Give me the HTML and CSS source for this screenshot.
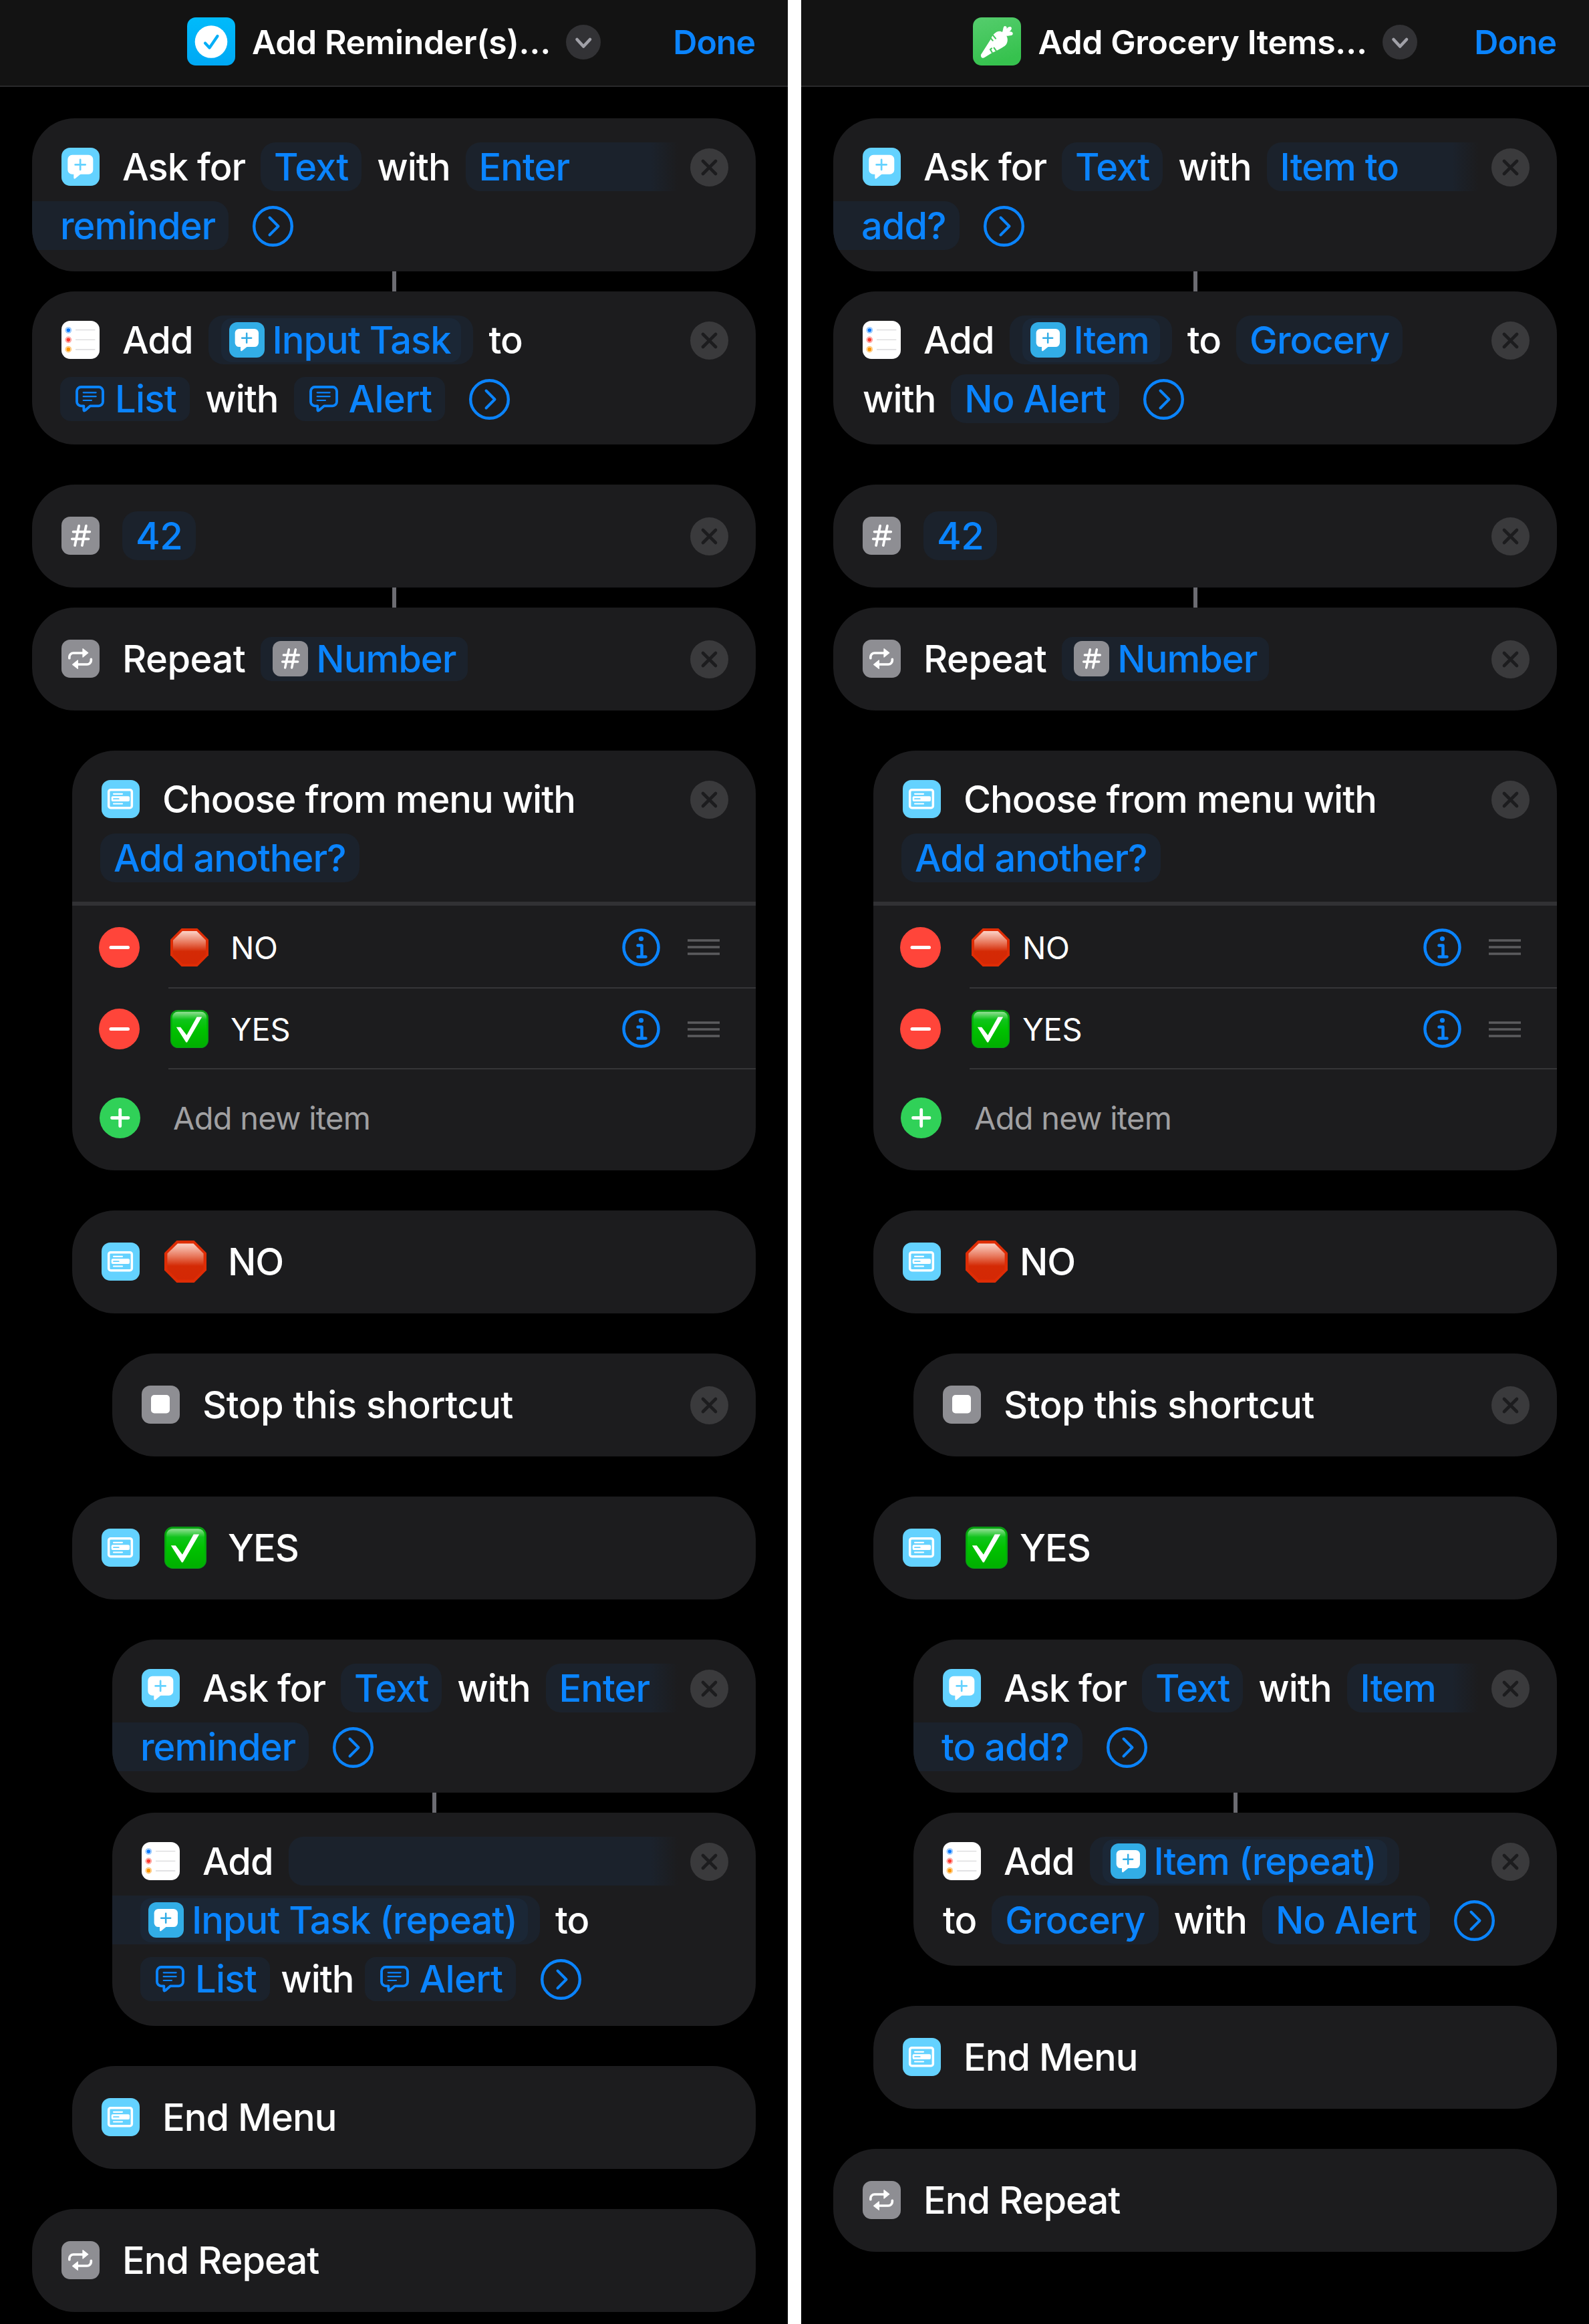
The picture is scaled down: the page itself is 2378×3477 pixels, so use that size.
FILE: index.html
```html
<!DOCTYPE html>
<html lang="en">
<head>
<meta charset="utf-8">
<title>Shortcuts</title>
<link rel="stylesheet" href="styles.css">
</head>
<body>
<svg class="defs" width="0" height="0" aria-hidden="true">
  <defs>
    <linearGradient id="g-blue" x1="0" y1="0" x2="0" y2="1"><stop offset="0" stop-color="#00bbfb"/><stop offset="1" stop-color="#00a8f4"/></linearGradient>
    <linearGradient id="g-green" x1="0" y1="0" x2="0.3" y2="1"><stop offset="0" stop-color="#55cd6d"/><stop offset="1" stop-color="#36c24e"/></linearGradient>
    <linearGradient id="g-stop" x1="0" y1="0" x2="0" y2="1"><stop offset="0" stop-color="#fbd3c8"/><stop offset="0.35" stop-color="#e8785c"/><stop offset="0.62" stop-color="#d42a05"/><stop offset="1" stop-color="#d42805"/></linearGradient>
    <linearGradient id="g-check" x1="0" y1="0" x2="0" y2="1"><stop offset="0" stop-color="#93df96"/><stop offset="0.22" stop-color="#10c41c"/><stop offset="0.5" stop-color="#00c200"/><stop offset="1" stop-color="#00b000"/></linearGradient>
  </defs>
  <symbol id="ask" viewBox="0 0 159 159">
    <rect x="26" y="30" width="106" height="81" rx="19" fill="#fff"/>
    <path d="M51 104v22q1 6 6 3l27-22z" fill="#fff"/>
    <path d="M78.500 50v42M57.500 71h42" fill="none" stroke="currentColor" stroke-width="7.500" stroke-linecap="round"/>
  </symbol>
  <symbol id="reminders" viewBox="0 0 171 171">
    <circle cx="31" cy="42" r="14.500" fill="#8fc4ff"/><circle cx="31" cy="42" r="10.500" fill="#d9ebff"/><circle cx="31" cy="42" r="8.500" fill="#0a7aff"/>
    <circle cx="31" cy="85" r="14.500" fill="#ff9d98"/><circle cx="31" cy="85" r="10.500" fill="#ffd9d7"/><circle cx="31" cy="85" r="8.500" fill="#ff3b30"/>
    <circle cx="31" cy="128" r="14.500" fill="#ffc878"/><circle cx="31" cy="128" r="10.500" fill="#ffe9c9"/><circle cx="31" cy="128" r="8.500" fill="#ff9500"/>
    <path d="M63 41h88M63 85h88M63 129h88" stroke="#d9d9db" stroke-width="4"/>
  </symbol>
  <symbol id="repeat" viewBox="0 0 171 171">
    <g fill="none" stroke="#fff" stroke-width="11" stroke-linecap="round"><path d="M35.500 83v-5a18 18 0 0 1 18-18H96"/><path d="M133 88v5a18 18 0 0 1-18 18H72"/></g>
    <g fill="#fff" stroke="#fff" stroke-width="4" stroke-linejoin="round"><path d="M96 41l23 18.500L96 78z"/><path d="M73 93l-23 18.500L73 130z"/></g>
  </symbol>
  <symbol id="hash" viewBox="0 0 159 159">
    <path d="M73 38L56 120M103 38L86 120M49 63h69M44 93h69" fill="none" stroke="#fff" stroke-width="10.500" stroke-linecap="round"/>
  </symbol>
  <symbol id="menu" viewBox="0 0 171 171">
    <rect x="32" y="44" width="104" height="81" rx="9" fill="none" stroke="#fff" stroke-width="10.500"/>
    <path d="M54 62.500h39M54 106.500h39" stroke="#fff" stroke-width="6.500" stroke-linecap="round"/>
    <rect x="44" y="73" width="82" height="23" rx="6" fill="#fff"/>
    <path d="M54 84.500h23" stroke="#64d2ff" stroke-width="5.500" stroke-linecap="round"/>
  </symbol>
  <symbol id="stopaction" viewBox="0 0 57 57"><rect x="14" y="14" width="28" height="27.500" rx="5" fill="#fff"/></symbol>
  <symbol id="comment" viewBox="0 0 129 120">
    <g fill="none" stroke="#0a84ff" stroke-linecap="round" stroke-linejoin="round">
      <path stroke-width="11.500" d="M25 6h79a19 19 0 0 1 19 19v47a19 19 0 0 1-19 19H66l-23 20q-6 4-6-3V91H25A19 19 0 0 1 6 72V25A19 19 0 0 1 25 6z"/>
      <path stroke-width="6.500" d="M35 31h57M35 48.500h57M35 66h37"/>
    </g>
  </symbol>
  <symbol id="info" viewBox="0 0 57 57">
    <g fill="none" stroke="#0a84ff" stroke-width="4.500" stroke-linecap="round" stroke-linejoin="round"><circle cx="28.500" cy="28.500" r="26"/><path d="M23.500 25.500h6v17M23.500 42.500h12"/></g><circle cx="28.500" cy="15.500" r="3.600" fill="#0a84ff"/>
  </symbol>
  <symbol id="go" viewBox="0 0 61 61"><g fill="none" stroke="#0a84ff" stroke-linecap="round" stroke-linejoin="round"><circle cx="30.500" cy="30.500" r="28.300" stroke-width="4.400"/><path stroke-width="4" d="M25.500 17.500L38.500 30.500L25.500 43.500"/></g></symbol>
  <symbol id="close" viewBox="0 0 57 57"><circle cx="28.500" cy="28.500" r="28.500" fill="#3a3a3c"/><path d="M19 19l19 19M38 19L19 38" stroke="#1c1c1e" stroke-width="4.600" stroke-linecap="round"/></symbol>
  <symbol id="minus" viewBox="0 0 61 61"><circle cx="30.500" cy="30.500" r="30.500" fill="#ff453a"/><path d="M18 30.500h25.500" stroke="#fff" stroke-width="5" stroke-linecap="round"/></symbol>
  <symbol id="plus" viewBox="0 0 61 61"><circle cx="30.500" cy="30.500" r="30.500" fill="#30d158"/><path d="M18.500 30.500h24.500M30.700 18.300v24.500" stroke="#fff" stroke-width="4.800" stroke-linecap="round"/></symbol>
  <symbol id="grip" viewBox="0 0 48 24"><path d="M0 2h48M0 12h48M0 22h48" stroke="#5b5b5e" stroke-width="3.500"/></symbol>
  <symbol id="down" viewBox="0 0 52 52"><circle cx="26" cy="26" r="26" fill="#323235"/><path d="M16.500 22l9.700 10.500L36 22" fill="none" stroke="#a1a1a8" stroke-width="4.600" stroke-linecap="round" stroke-linejoin="round"/></symbol>
  <symbol id="sign" viewBox="0 0 171 171">
    <path d="M50 0h71l50 50v71l-50 50H50L0 121V50z" fill="#de2c05"/>
    <path d="M54 12h64l41 41v65l-41 41H54l-42-41V53z" fill="url(#g-stop)"/>
  </symbol>
  <symbol id="tick" viewBox="0 0 180 180">
    <rect width="180" height="180" rx="36" fill="#0a9a14"/>
    <rect x="4" y="8" width="172" height="168" rx="32" fill="#00b604"/>
    <rect x="9" y="9" width="162" height="164" rx="26" fill="url(#g-check)"/>
    <path d="M28 81h20l29 38 48-86h24L79 153h-5z" fill="#fff"/>
  </symbol>
  <symbol id="app-check" viewBox="0 0 72 72"><rect width="72" height="72" rx="13" fill="url(#g-blue)"/><circle cx="36" cy="36.500" r="24.300" fill="#fff"/><path d="M27 38.500l6.500 7L45.500 28" fill="none" stroke="#00aef7" stroke-width="4.200" stroke-linecap="round" stroke-linejoin="round"/></symbol>
  <symbol id="app-carrot" viewBox="0 0 216 216">
    <rect width="216" height="216" rx="39" fill="url(#g-green)"/>
    <g fill="#fff"><path d="M36 167L80 98C88 78 101 63 120 62C128 62 133 66 138 71C148 76 154 84 155 95C157 108 152 121 143 128C125 141 103 151 86 159L52 180C43 186 34 179 36 167z"/>
    <path d="M130 68C138 61 133 42 143 39C151 38 153 45 152 52C158 40 170 40 173 46C176 53 169 60 164 64C173 63 181 68 179 75C176 84 160 82 145 84z"/></g>
    <path d="M77 90l12 14M89 79l13 16M84 139l-6 5 8 13M95 137l10 14" fill="none" stroke="#46c85e" stroke-width="6.500" stroke-linecap="round"/>
  </symbol>
</svg>

<main class="screen">
  <header class="bar">
    <div class="bar-title"><svg class="app"><use href="#app-check"/></svg><h1>Add Reminder(s)…</h1><svg class="down"><use href="#down"/></svg></div>
    <span class="done">Done</span>
  </header>
  <div class="flow">
    <section class="card">
      <div class="line"><svg class="icon sky"><use href="#ask"/></svg><span>Ask for</span><span class="pill">Text</span><span>with</span><span class="pill open">Enter</span><svg class="close"><use href="#close"/></svg></div>
      <div class="line"><span class="pill cont">reminder</span><svg class="go"><use href="#go"/></svg></div>
    </section>
    <div class="link"></div>
    <section class="card">
      <div class="line"><svg class="icon white"><use href="#reminders"/></svg><span>Add</span><span class="pill nest"><span class="var"><svg class="mini cyan"><use href="#ask"/></svg>Input Task</span></span><span>to</span><svg class="close"><use href="#close"/></svg></div>
      <div class="line"><span class="pill note lead"><svg class="cmt"><use href="#comment"/></svg>List</span><span>with</span><span class="pill note"><svg class="cmt"><use href="#comment"/></svg>Alert</span><svg class="go"><use href="#go"/></svg></div>
    </section>

    <section class="card single gap">
      <div class="line"><svg class="icon gray"><use href="#hash"/></svg><span class="pill number">42</span><svg class="close"><use href="#close"/></svg></div>
    </section>
    <div class="link"></div>
    <section class="card single">
      <div class="line"><svg class="icon gray"><use href="#repeat"/></svg><span class="loose">Repeat</span><span class="pill magic"><svg class="mini gray"><use href="#hash"/></svg>Number</span><svg class="close"><use href="#close"/></svg></div>
    </section>

    <div class="indent">
      <section class="card menu gap">
        <div class="line"><svg class="icon sky"><use href="#menu"/></svg><span>Choose from menu with</span><svg class="close"><use href="#close"/></svg></div>
        <div class="line"><span class="pill lead">Add another?</span></div>
        <ul class="items">
          <li><svg class="dot"><use href="#minus"/></svg><div class="item"><svg class="emoji"><use href="#sign"/></svg><span class="wide">NO</span><svg class="info"><use href="#info"/></svg><svg class="grip"><use href="#grip"/></svg></div></li>
          <li><svg class="dot"><use href="#minus"/></svg><div class="item"><svg class="emoji"><use href="#tick"/></svg><span class="wide">YES</span><svg class="info"><use href="#info"/></svg><svg class="grip"><use href="#grip"/></svg></div></li>
          <li class="new"><svg class="dot"><use href="#plus"/></svg><span>Add new item</span></li>
        </ul>
      </section>

      <section class="card single gap"><div class="line"><svg class="icon sky"><use href="#menu"/></svg><span class="case wide"><svg class="emoji"><use href="#sign"/></svg>NO</span></div></section>
      <div class="indent">
        <section class="card single gap"><div class="line"><svg class="icon gray"><use href="#stopaction"/></svg><span class="loose">Stop this shortcut</span><svg class="close"><use href="#close"/></svg></div></section>
      </div>
      <section class="card single gap"><div class="line"><svg class="icon sky"><use href="#menu"/></svg><span class="case wide"><svg class="emoji"><use href="#tick"/></svg>YES</span></div></section>
      <div class="indent">
        <section class="card gap">
          <div class="line"><svg class="icon sky"><use href="#ask"/></svg><span>Ask for</span><span class="pill">Text</span><span>with</span><span class="pill open">Enter</span><svg class="close"><use href="#close"/></svg></div>
          <div class="line"><span class="pill cont">reminder</span><svg class="go"><use href="#go"/></svg></div>
        </section>
        <div class="link"></div>
        <section class="card tall">
          <div class="line"><svg class="icon white"><use href="#reminders"/></svg><span>Add</span><span class="pill open"></span><svg class="close"><use href="#close"/></svg></div>
          <div class="line"><span class="pill nest cont"><span class="var"><svg class="mini cyan"><use href="#ask"/></svg>Input Task (repeat)</span></span><span>to</span></div>
          <div class="line tight"><span class="pill note lead"><svg class="cmt"><use href="#comment"/></svg>List</span><span>with</span><span class="pill note"><svg class="cmt"><use href="#comment"/></svg>Alert</span><svg class="go"><use href="#go"/></svg></div>
        </section>
      </div>
      <section class="card single gap"><div class="line"><svg class="icon sky"><use href="#menu"/></svg><span>End Menu</span></div></section>
    </div>
    <section class="card single gap"><div class="line"><svg class="icon gray"><use href="#repeat"/></svg><span>End Repeat</span></div></section>
  </div>
</main>

<main class="screen">
  <header class="bar">
    <div class="bar-title"><svg class="app"><use href="#app-carrot"/></svg><h1>Add Grocery Items…</h1><svg class="down"><use href="#down"/></svg></div>
    <span class="done">Done</span>
  </header>
  <div class="flow">
    <section class="card">
      <div class="line"><svg class="icon sky"><use href="#ask"/></svg><span>Ask for</span><span class="pill">Text</span><span>with</span><span class="pill open">Item to</span><svg class="close"><use href="#close"/></svg></div>
      <div class="line"><span class="pill cont">add?</span><svg class="go"><use href="#go"/></svg></div>
    </section>
    <div class="link"></div>
    <section class="card">
      <div class="line"><svg class="icon white"><use href="#reminders"/></svg><span>Add</span><span class="pill nest"><span class="var"><svg class="mini cyan"><use href="#ask"/></svg>Item</span></span><span>to</span><span class="pill">Grocery</span><svg class="close"><use href="#close"/></svg></div>
      <div class="line"><span>with</span><span class="pill">No Alert</span><svg class="go"><use href="#go"/></svg></div>
    </section>

    <section class="card single gap">
      <div class="line"><svg class="icon gray"><use href="#hash"/></svg><span class="pill number">42</span><svg class="close"><use href="#close"/></svg></div>
    </section>
    <div class="link"></div>
    <section class="card single">
      <div class="line"><svg class="icon gray"><use href="#repeat"/></svg><span class="loose">Repeat</span><span class="pill magic"><svg class="mini gray"><use href="#hash"/></svg>Number</span><svg class="close"><use href="#close"/></svg></div>
    </section>

    <div class="indent">
      <section class="card menu gap">
        <div class="line"><svg class="icon sky"><use href="#menu"/></svg><span>Choose from menu with</span><svg class="close"><use href="#close"/></svg></div>
        <div class="line"><span class="pill lead">Add another?</span></div>
        <ul class="items">
          <li><svg class="dot"><use href="#minus"/></svg><div class="item"><svg class="emoji"><use href="#sign"/></svg><span>NO</span><svg class="info"><use href="#info"/></svg><svg class="grip"><use href="#grip"/></svg></div></li>
          <li><svg class="dot"><use href="#minus"/></svg><div class="item"><svg class="emoji"><use href="#tick"/></svg><span>YES</span><svg class="info"><use href="#info"/></svg><svg class="grip"><use href="#grip"/></svg></div></li>
          <li class="new"><svg class="dot"><use href="#plus"/></svg><span>Add new item</span></li>
        </ul>
      </section>

      <section class="card single gap"><div class="line"><svg class="icon sky"><use href="#menu"/></svg><span class="case"><svg class="emoji"><use href="#sign"/></svg>NO</span></div></section>
      <div class="indent">
        <section class="card single gap"><div class="line"><svg class="icon gray"><use href="#stopaction"/></svg><span class="loose">Stop this shortcut</span><svg class="close"><use href="#close"/></svg></div></section>
      </div>
      <section class="card single gap"><div class="line"><svg class="icon sky"><use href="#menu"/></svg><span class="case"><svg class="emoji"><use href="#tick"/></svg>YES</span></div></section>
      <div class="indent">
        <section class="card gap">
          <div class="line"><svg class="icon sky"><use href="#ask"/></svg><span>Ask for</span><span class="pill">Text</span><span>with</span><span class="pill open">Item</span><svg class="close"><use href="#close"/></svg></div>
          <div class="line"><span class="pill cont">to add?</span><svg class="go"><use href="#go"/></svg></div>
        </section>
        <div class="link"></div>
        <section class="card">
          <div class="line"><svg class="icon white"><use href="#reminders"/></svg><span>Add</span><span class="pill nest"><span class="var"><svg class="mini cyan"><use href="#ask"/></svg>Item (repeat)</span></span><svg class="close"><use href="#close"/></svg></div>
          <div class="line"><span>to</span><span class="pill">Grocery</span><span>with</span><span class="pill">No Alert</span><svg class="go"><use href="#go"/></svg></div>
        </section>
      </div>
      <section class="card single gap"><div class="line"><svg class="icon sky"><use href="#menu"/></svg><span>End Menu</span></div></section>
    </div>
    <section class="card single gap"><div class="line"><svg class="icon gray"><use href="#repeat"/></svg><span>End Repeat</span></div></section>
  </div>
</main>
</body>
</html>
```

FILE: styles.css
```css
* { box-sizing: border-box; }

body {
  margin: 0;
  display: flex;
  gap: 20px;
  width: 2378px;
  height: 3477px;
  overflow: hidden;
  background: #fff;
  color: #fff;
  font-family: Inter, "Liberation Sans", sans-serif;
  font-size: 56px;
  font-weight: 500;
  line-height: 1;
  white-space: nowrap;
}

svg { display: block; flex: none; }
.defs { position: absolute; }

.screen {
  flex: none;
  width: 1179px;
  height: 3477px;
  background: #000;
}

/* Title bar */
.bar {
  display: grid;
  grid-template-columns: 1fr auto 1fr;
  align-items: center;
  height: 130px;
  padding: 0 49px 2px;
  background: #131313;
  border-bottom: 2px solid #29292b;
}
.bar-title {
  grid-column: 2;
  display: flex;
  align-items: center;
}
.app { width: 72px; height: 72px; margin: 0 25px 2px 0; }
.down { width: 52px; height: 52px; margin: 0 0 0 23px; }
h1, .done { margin: 0; font-size: 50px; font-weight: 600; }
h1 { letter-spacing: -0.45px; }
.done { justify-self: end; color: #0a84ff; letter-spacing: -1px; }

/* Action list */
.flow { padding: 47px 48px 0; }
.indent { padding-left: 60px; }
.gap { margin-top: 60px; }
.link { width: 6px; height: 30px; margin: 0 auto; background: #6c6c72; }

.card {
  display: flex;
  flex-direction: column;
  gap: 15px;
  height: 229px;
  padding-top: 36px;
  border-radius: 64px;
  background: #1c1c1e;
  overflow: hidden;
}
.card.single { height: 154px; padding-top: 40px; }
.card.tall { height: 319px; }
.card.menu { height: 628px; }

.line {
  display: flex;
  align-items: center;
  gap: 23px;
  flex: none;
  height: 73px;
  padding: 0 41px 0 44px;
  letter-spacing: -1px;
}
.line.tight { gap: 16px; }
.loose { letter-spacing: -0.5px; }

.icon { width: 57px; height: 57px; margin-right: 11px; border-radius: 13px; }
.sky { background: #64d2ff; color: #64d2ff; }
.white { background: #fff; }
.gray { background: #8e8e93; }
.cyan { background: #32ade6; color: #32ade6; }
.close { width: 57px; height: 57px; margin: 2px 0 0 auto; }
.go { width: 61px; height: 61px; margin: 2px 0 0 13px; }
.tight .go { margin-left: 21px; }

/* Parameter tokens */
.pill {
  display: flex;
  align-items: center;
  height: 73px;
  padding: 0 20px;
  border-radius: 22px;
  background: #1b222c;
  color: #0a84ff;
}
.pill.number { letter-spacing: -0.5px; }
.pill.lead { margin-left: -2px; }
.pill.open {
  flex: 1;
  margin-right: -4px;
  border-radius: 22px 0 0 22px;
  background: linear-gradient(to left, #1c1c1e, #1b222c 40px);
}
.pill.cont { margin-left: -44px; padding-left: 42px; border-radius: 0 22px 22px 0; }
.pill.note, .pill.magic { height: 66px; border-radius: 16px; }
.pill.note { letter-spacing: -0.7px; }
.pill.magic { padding: 0 18px; }
.pill.nest { padding: 0 18px 0 19px; }
.pill.nest.cont { padding-left: 42px; }
.var {
  display: flex;
  align-items: center;
  height: 66px;
  padding: 0 16px 0 12px;
  border-radius: 16px;
  background: #1b2736;
}
.mini { width: 53px; height: 53px; margin-right: 12px; border-radius: 12px; }
.cmt { width: 43px; height: 40px; margin: 0 16px 0 3px; }

/* Menu items */
.items { flex: none; margin: 14px 0 0; padding: 0; list-style: none; border-top: 6px solid #313134; font-size: 47px; font-weight: 400; }
.items li { display: flex; align-items: center; height: 121px; padding-left: 40px; }
.items li:first-child { height: 124px; }
.items .new { height: 145px; padding-left: 41px; color: #a0a0a2; letter-spacing: -0.75px; }
.new span { margin-left: 49px; }
.dot { width: 61px; height: 61px; }
.item {
  flex: 1;
  align-self: stretch;
  display: flex;
  align-items: center;
  margin-left: 43px;
  padding: 2px 54px 0 3px;
  border-bottom: 2px solid #353538;
}
.emoji { width: 57px; height: 57px; }
.item span { margin-left: 19px; letter-spacing: -0.3px; }
.item .wide { margin-left: 33px; }
.info { width: 57px; height: 57px; margin-left: auto; }
.grip { width: 48px; height: 24px; margin-left: 41px; }

.case { display: flex; align-items: center; margin-left: 3px; }
.case .emoji { width: 63px; height: 63px; margin-right: 18px; }
.case.wide .emoji { margin-right: 32px; }
```
